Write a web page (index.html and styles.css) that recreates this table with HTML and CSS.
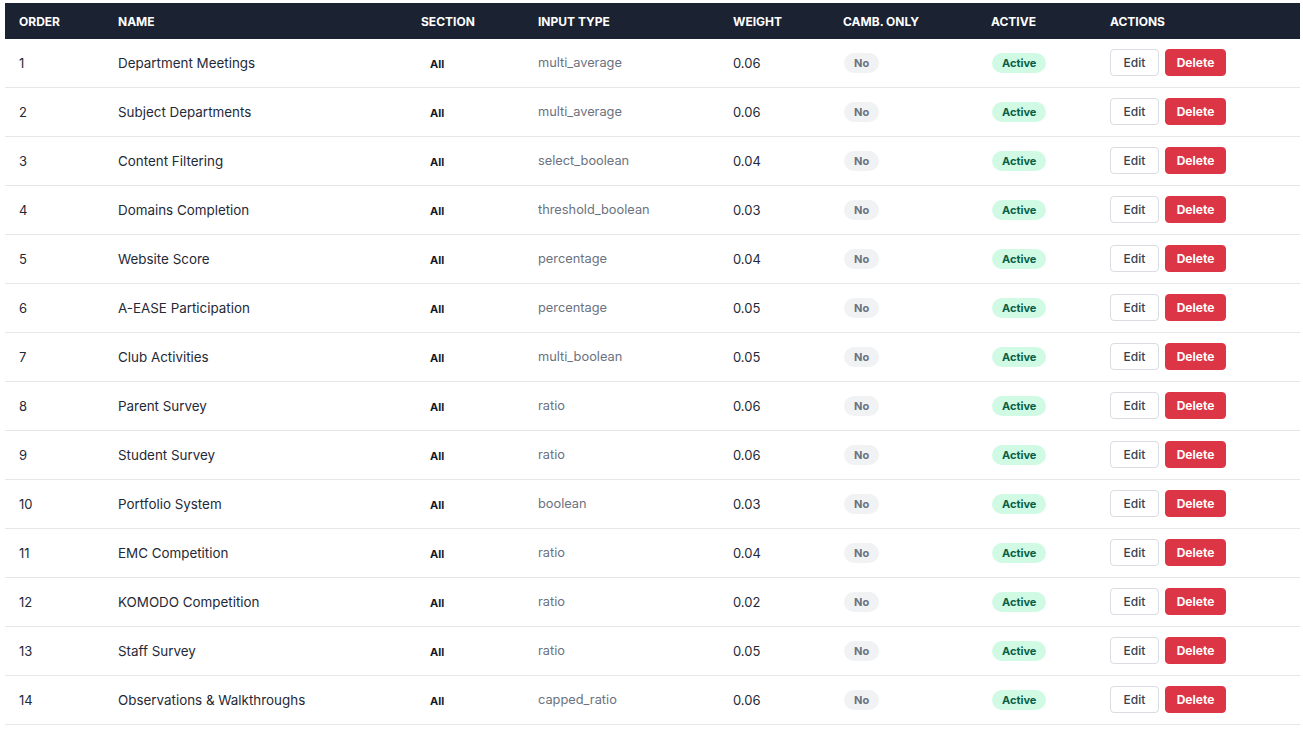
FILE: index.html
```html
<!DOCTYPE html>
<html>
<head>
<meta charset="utf-8">
<link rel="stylesheet" href="styles.css">
</head>
<body>
<table class="grid">
  <colgroup>
    <col class="c-order"><col class="c-name"><col class="c-section"><col class="c-type"><col class="c-weight"><col class="c-camb"><col class="c-active"><col class="c-actions">
  </colgroup>
  <thead>
    <tr><th>Order</th><th>Name</th><th>Section</th><th>Input Type</th><th>Weight</th><th>Camb. Only</th><th>Active</th><th>Actions</th></tr>
  </thead>
  <tbody>
    <tr><td>1</td><td class="name">Department Meetings</td><td><span class="sec">All</span></td><td class="type">multi_average</td><td>0.06</td><td><span class="pill no">No</span></td><td><span class="pill yes">Active</span></td><td><div class="acts"><button class="btn edit">Edit</button><button class="btn del">Delete</button></div></td></tr>
    <tr><td>2</td><td class="name">Subject Departments</td><td><span class="sec">All</span></td><td class="type">multi_average</td><td>0.06</td><td><span class="pill no">No</span></td><td><span class="pill yes">Active</span></td><td><div class="acts"><button class="btn edit">Edit</button><button class="btn del">Delete</button></div></td></tr>
    <tr><td>3</td><td class="name">Content Filtering</td><td><span class="sec">All</span></td><td class="type">select_boolean</td><td>0.04</td><td><span class="pill no">No</span></td><td><span class="pill yes">Active</span></td><td><div class="acts"><button class="btn edit">Edit</button><button class="btn del">Delete</button></div></td></tr>
    <tr><td>4</td><td class="name">Domains Completion</td><td><span class="sec">All</span></td><td class="type">threshold_boolean</td><td>0.03</td><td><span class="pill no">No</span></td><td><span class="pill yes">Active</span></td><td><div class="acts"><button class="btn edit">Edit</button><button class="btn del">Delete</button></div></td></tr>
    <tr><td>5</td><td class="name">Website Score</td><td><span class="sec">All</span></td><td class="type">percentage</td><td>0.04</td><td><span class="pill no">No</span></td><td><span class="pill yes">Active</span></td><td><div class="acts"><button class="btn edit">Edit</button><button class="btn del">Delete</button></div></td></tr>
    <tr><td>6</td><td class="name">A-EASE Participation</td><td><span class="sec">All</span></td><td class="type">percentage</td><td>0.05</td><td><span class="pill no">No</span></td><td><span class="pill yes">Active</span></td><td><div class="acts"><button class="btn edit">Edit</button><button class="btn del">Delete</button></div></td></tr>
    <tr><td>7</td><td class="name">Club Activities</td><td><span class="sec">All</span></td><td class="type">multi_boolean</td><td>0.05</td><td><span class="pill no">No</span></td><td><span class="pill yes">Active</span></td><td><div class="acts"><button class="btn edit">Edit</button><button class="btn del">Delete</button></div></td></tr>
    <tr><td>8</td><td class="name">Parent Survey</td><td><span class="sec">All</span></td><td class="type">ratio</td><td>0.06</td><td><span class="pill no">No</span></td><td><span class="pill yes">Active</span></td><td><div class="acts"><button class="btn edit">Edit</button><button class="btn del">Delete</button></div></td></tr>
    <tr><td>9</td><td class="name">Student Survey</td><td><span class="sec">All</span></td><td class="type">ratio</td><td>0.06</td><td><span class="pill no">No</span></td><td><span class="pill yes">Active</span></td><td><div class="acts"><button class="btn edit">Edit</button><button class="btn del">Delete</button></div></td></tr>
    <tr><td>10</td><td class="name">Portfolio System</td><td><span class="sec">All</span></td><td class="type">boolean</td><td>0.03</td><td><span class="pill no">No</span></td><td><span class="pill yes">Active</span></td><td><div class="acts"><button class="btn edit">Edit</button><button class="btn del">Delete</button></div></td></tr>
    <tr><td>11</td><td class="name">EMC Competition</td><td><span class="sec">All</span></td><td class="type">ratio</td><td>0.04</td><td><span class="pill no">No</span></td><td><span class="pill yes">Active</span></td><td><div class="acts"><button class="btn edit">Edit</button><button class="btn del">Delete</button></div></td></tr>
    <tr><td>12</td><td class="name">KOMODO Competition</td><td><span class="sec">All</span></td><td class="type">ratio</td><td>0.02</td><td><span class="pill no">No</span></td><td><span class="pill yes">Active</span></td><td><div class="acts"><button class="btn edit">Edit</button><button class="btn del">Delete</button></div></td></tr>
    <tr><td>13</td><td class="name">Staff Survey</td><td><span class="sec">All</span></td><td class="type">ratio</td><td>0.05</td><td><span class="pill no">No</span></td><td><span class="pill yes">Active</span></td><td><div class="acts"><button class="btn edit">Edit</button><button class="btn del">Delete</button></div></td></tr>
    <tr><td>14</td><td class="name">Observations &amp; Walkthroughs</td><td><span class="sec">All</span></td><td class="type">capped_ratio</td><td>0.06</td><td><span class="pill no">No</span></td><td><span class="pill yes">Active</span></td><td><div class="acts"><button class="btn edit">Edit</button><button class="btn del">Delete</button></div></td></tr>
  </tbody>
</table>
</body>
</html>
```

FILE: styles.css
```css
* { box-sizing: border-box; }
body {
  margin: 0;
  padding: 3px 3px 0 5px;
  background: #ffffff;
  font-family: Inter, "Noto Sans", sans-serif;
  color: #1f2937;
}
.grid {
  width: 1295px;
  border-collapse: collapse;
  table-layout: fixed;
}
.c-order { width: 99px; }
.c-name { width: 303px; }
.c-section { width: 117px; }
.c-type { width: 195px; }
.c-weight { width: 110px; }
.c-camb { width: 148px; }
.c-active { width: 119px; }
.c-actions { width: 204px; }
.grid th {
  background: #1b2232;
  color: #ffffff;
  font-size: 12px;
  font-weight: 700;
  text-transform: uppercase;
  text-align: left;
  height: 36px;
  padding: 0 14px;
}
.grid td {
  height: 49px;
  padding: 0 14px;
  font-size: 13px;
  border-bottom: 1px solid #e5e7eb;
  vertical-align: middle;
  white-space: nowrap;
}
.grid tbody tr:first-child td { height: 48px; }
.grid td.name { font-size: 13.4px; }
.sec {
  display: inline-block;
  padding-left: 9px;
  font-size: 11px;
  font-weight: 700;
  color: #111827;
}
.grid td.type { color: #6b7280; font-size: 12.8px; }
.pill {
  display: inline-block;
  height: 20px;
  line-height: 20px;
  border-radius: 10px;
  font-size: 11px;
  font-weight: 700;
  margin-left: 1px;
}
.no { background: #f1f2f4; color: #6b7280; padding: 0 10px; }
.yes { background: #d1fae5; color: #065f46; padding: 0 10px; }
.acts { display: flex; gap: 6px; }
.btn {
  height: 27px;
  border-radius: 4px;
  font-family: inherit;
  font-size: 12px;
  cursor: pointer;
}
.edit {
  width: 49px;
  background: #ffffff;
  border: 1px solid #d9dce1;
  color: #374151;
  font-weight: 500;
}
.del {
  width: 61px;
  background: #dc3545;
  border: 1px solid #dc3545;
  color: #ffffff;
  font-weight: 700;
}
```
